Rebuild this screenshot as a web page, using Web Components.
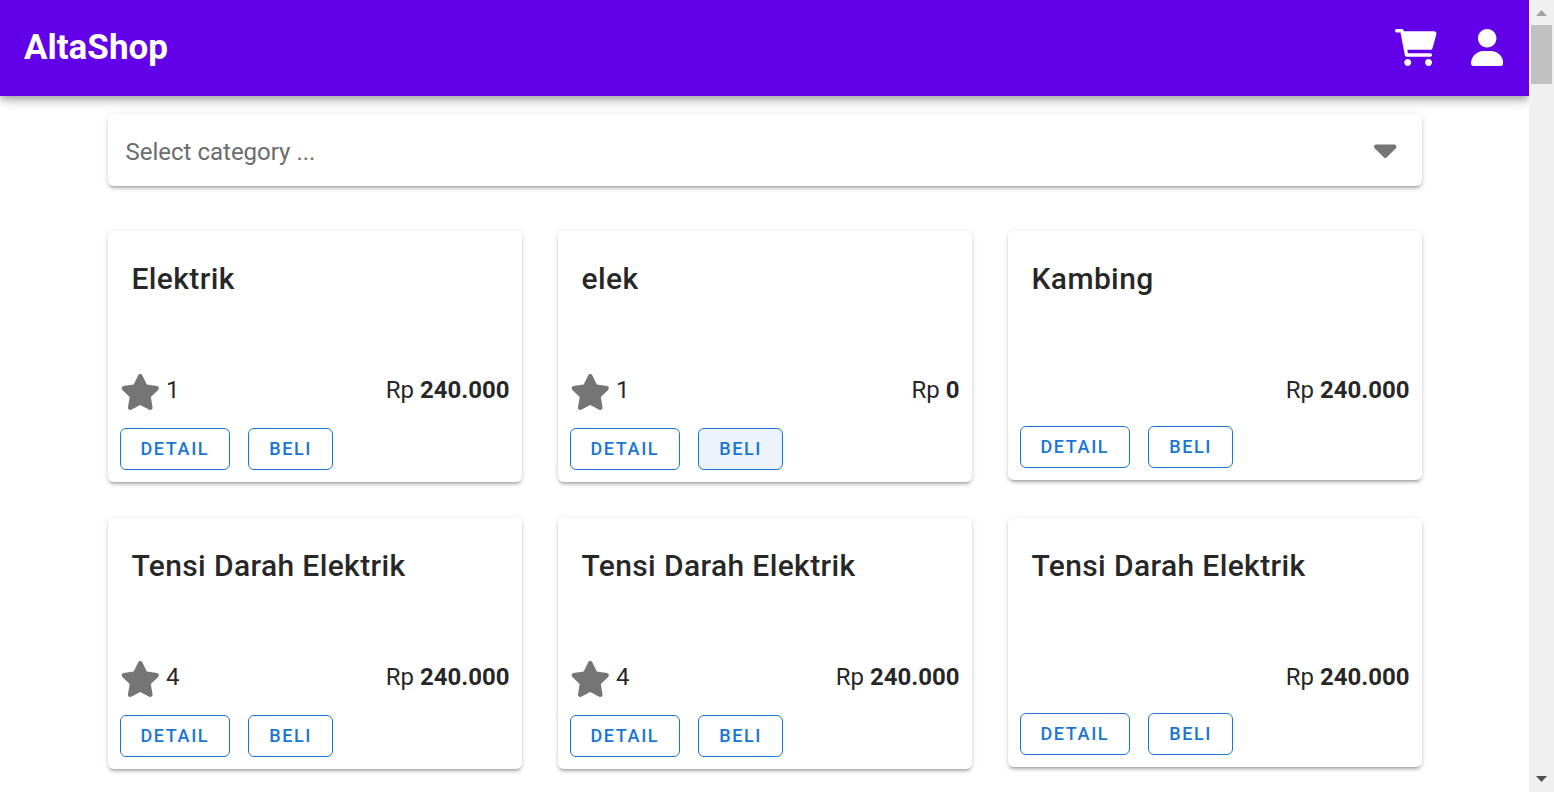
<!DOCTYPE html>
<html lang="id">
<head>
<meta charset="utf-8">
<title>AltaShop</title>
<style>
  body { margin: 0; background: #fff; color: rgba(0, 0, 0, .87); font: 24px/36px Roboto, "Liberation Sans", sans-serif; }
</style>
</head>
<body>
<shop-window>
  <shop-header slot="header" name="AltaShop"></shop-header>
  <category-select placeholder="Select category ..."></category-select>
  <product-grid>
    <product-card rating="1" price="240.000">Elektrik</product-card>
    <product-card rating="1" price="0" active-buy>elek</product-card>
    <product-card price="240.000">Kambing</product-card>
    <product-card rating="4" price="240.000">Tensi Darah Elektrik</product-card>
    <product-card rating="4" price="240.000">Tensi Darah Elektrik</product-card>
    <product-card price="240.000">Tensi Darah Elektrik</product-card>
  </product-grid>
</shop-window>

<script>
const icons = {
  cart: ['0 0 576 512', 'M96 0C107.5 0 117.4 8.19 119.6 19.51L121.1 32H541.8C562.1 32 578.3 52.25 572.6 72.66L518.6 264.7C514.7 278.5 502.1 288 487.8 288H170.7L179.9 336H488C501.3 336 512 346.7 512 360C512 373.3 501.3 384 488 384H159.1C148.5 384 138.6 375.8 136.4 364.5L76.14 48H24C10.75 48 0 37.25 0 24C0 10.75 10.75 0 24 0H96zM128 464C128 437.5 149.5 416 176 416C202.5 416 224 437.5 224 464C224 490.5 202.5 512 176 512C149.5 512 128 490.5 128 464zM512 464C512 490.5 490.5 512 464 512C437.5 512 416 490.5 416 464C416 437.5 437.5 416 464 416C490.5 416 512 437.5 512 464z'],
  user: ['0 0 448 512', 'M224 256c70.7 0 128-57.31 128-128s-57.3-128-128-128C153.3 0 96 57.31 96 128S153.3 256 224 256zM274.7 304H173.3C77.61 304 0 381.6 0 477.3c0 19.14 15.52 34.67 34.66 34.67h378.7C432.5 512 448 496.5 448 477.3C448 381.6 370.4 304 274.7 304z'],
  star: ['0 0 576 512', 'M381.2 150.3L524.9 171.5C536.8 173.2 546.8 181.6 550.6 193.1C554.4 204.7 551.3 217.3 542.7 225.9L438.5 328.1L463.1 474.7C465.1 486.7 460.2 498.9 450.2 506C440.3 513.1 427.2 514 416.5 508.3L288.1 439.8L159.8 508.3C149 514 135.9 513.1 126 506C116.1 498.9 111.1 486.7 113.2 474.7L137.8 328.1L33.58 225.9C24.97 217.3 21.91 204.7 25.69 193.1C29.46 181.6 39.43 173.2 51.42 171.5L195 150.3L259.4 17.97C264.7 6.995 275.8 .0131 288.1 .0131C300.4 .0131 311.5 6.995 316.9 17.97L381.2 150.3z'],
  caret: ['0 0 320 512', 'M310.6 246.6l-127.1 128C176.4 380.9 168.2 384 160 384s-16.38-3.125-22.63-9.375l-127.1-128C.2244 237.5-2.516 223.7 2.438 211.8S19.07 192 32 192h255.1c12.94 0 24.62 7.781 29.58 19.75S319.8 237.5 310.6 246.6z']
};

class BaseElement extends HTMLElement {
  connectedCallback() {
    if (!this.shadowRoot) this.attachShadow({ mode: 'open' }).innerHTML = this.render();
  }
}

customElements.define('shop-icon', class extends BaseElement {
  render() {
    const [box, path] = icons[this.getAttribute('name')];
    return `<style>:host { display: block; height: 36px; } svg { display: block; height: 100%; fill: currentColor; }</style>
      <svg viewBox="${box}" aria-hidden="true"><path d="${path}"/></svg>`;
  }
});

customElements.define('page-scrollbar', class extends BaseElement {
  render() {
    return `<style>
        :host { display: flex; flex-direction: column; width: 25px; background: #f0f0f0; }
        svg { display: block; width: 25px; height: 25px; }
        .track { flex: 1; padding: 0 2px; }
        .thumb { height: 8%; background: #c1c1c1; }
      </style>
      <svg viewBox="0 0 25 25"><path d="M7 16h11l-5.500-6z" fill="#a3a3a3"/></svg>
      <div class="track"><div class="thumb"></div></div>
      <svg viewBox="0 0 25 25"><path d="M7 9h11l-5.500 6z" fill="#505050"/></svg>`;
  }
});

customElements.define('shop-window', class extends BaseElement {
  render() {
    return `<style>
        :host { display: grid; grid-template-columns: 1fr auto; height: 100vh; overflow: hidden; }
        .view { overflow: hidden; min-width: 0; }
        main { box-sizing: border-box; max-width: 1350px; margin: 0 auto; padding: 18px; }
      </style>
      <div class="view"><slot name="header"></slot><main><slot></slot></main></div>
      <page-scrollbar aria-hidden="true"></page-scrollbar>`;
  }
});

customElements.define('shop-header', class extends BaseElement {
  render() {
    return `<style>
        :host { display: block; background: #6200ea; color: #fff; position: relative;
          box-shadow: 0 3px 6px -1px rgba(0,0,0,.2), 0 6px 8px rgba(0,0,0,.14), 0 2px 15px rgba(0,0,0,.12); }
        header { display: flex; align-items: center; justify-content: space-between; height: 96px; padding: 0 26px 0 24px; }
        a { color: inherit; text-decoration: none; }
        .brand { font-size: 35px; line-height: 48px; font-weight: 700; }
        nav { display: flex; gap: 34px; padding-bottom: 2px; }
        shop-icon { height: 37px; }
      </style>
      <header>
        <a class="brand" href="#">${this.getAttribute('name')}</a>
        <nav>
          <a href="#cart" aria-label="Cart"><shop-icon name="cart"></shop-icon></a>
          <a href="#account" aria-label="Account"><shop-icon name="user"></shop-icon></a>
        </nav>
      </header>`;
  }
});

customElements.define('category-select', class extends BaseElement {
  render() {
    const label = this.getAttribute('placeholder');
    return `<style>
        :host { display: grid; align-items: center; margin-bottom: 45px; border-radius: 6px; background: #fff;
          box-shadow: 0 4px 2px -3px rgba(0,0,0,.2), 0 3px 3px rgba(0,0,0,.14), 0 1px 7px rgba(0,0,0,.12); }
        select, shop-icon { grid-area: 1 / 1; }
        select { appearance: none; width: 100%; height: 72px; padding: 4px 60px 0 18px; border: 0; border-radius: 6px; background: none;
          font: inherit; color: #6c6c6c; }
        shop-icon { justify-self: end; margin-right: 25px; padding-bottom: 2px; color: #757575; pointer-events: none; }
      </style>
      <select aria-label="Category"><option>${label}</option></select>
      <shop-icon name="caret"></shop-icon>`;
  }
});

customElements.define('product-grid', class extends BaseElement {
  render() {
    return `<style>
        :host { display: grid; grid-template-columns: repeat(auto-fill, minmax(360px, 1fr)); gap: 36px; align-items: start; }
      </style><slot></slot>`;
  }
});

customElements.define('outline-button', class extends BaseElement {
  render() {
    return `<style>
        :host { display: block; }
        button { display: block; height: 42px; padding: 0 20px; border: 1px solid #1976d2; border-radius: 6px; background: #fff; color: #1976d2;
          font: 500 18px/24px Roboto, "Liberation Sans", sans-serif; letter-spacing: .09em; text-transform: uppercase; cursor: pointer; }
        button:hover, :host([active]) button { background: #edf3fc; }
      </style><button type="button"><slot></slot></button>`;
  }
});

customElements.define('product-card', class extends BaseElement {
  render() {
    const rating = this.getAttribute('rating');
    const active = this.hasAttribute('active-buy') ? 'active' : '';
    return `<style>
        :host { display: block; border-radius: 6px; background: #fff;
          box-shadow: 0 4px 2px -3px rgba(0,0,0,.2), 0 3px 3px rgba(0,0,0,.14), 0 1px 7px rgba(0,0,0,.12); }
        h2 { margin: 0; min-height: 117px; padding: 24px 24px 0; font-size: 30px; line-height: 48px; font-weight: 500; letter-spacing: .0125em; }
        .info { display: flex; justify-content: space-between; padding: 0 12px; }
        .rating { display: flex; gap: 6px; }
        shop-icon { padding-top: 2px; color: #757575; }
        .price { margin-left: auto; }
        .actions { display: flex; gap: 18px; padding: 18px 12px 12px; }
      </style>
      <article>
        <h2><slot></slot></h2>
        <div class="info">
          ${rating ? `<div class="rating"><shop-icon name="star"></shop-icon><span>${rating}</span></div>` : ''}
          <div class="price">Rp <b>${this.getAttribute('price')}</b></div>
        </div>
        <div class="actions"><outline-button>Detail</outline-button><outline-button ${active}>Beli</outline-button></div>
      </article>`;
  }
});
</script>
</body>
</html>
